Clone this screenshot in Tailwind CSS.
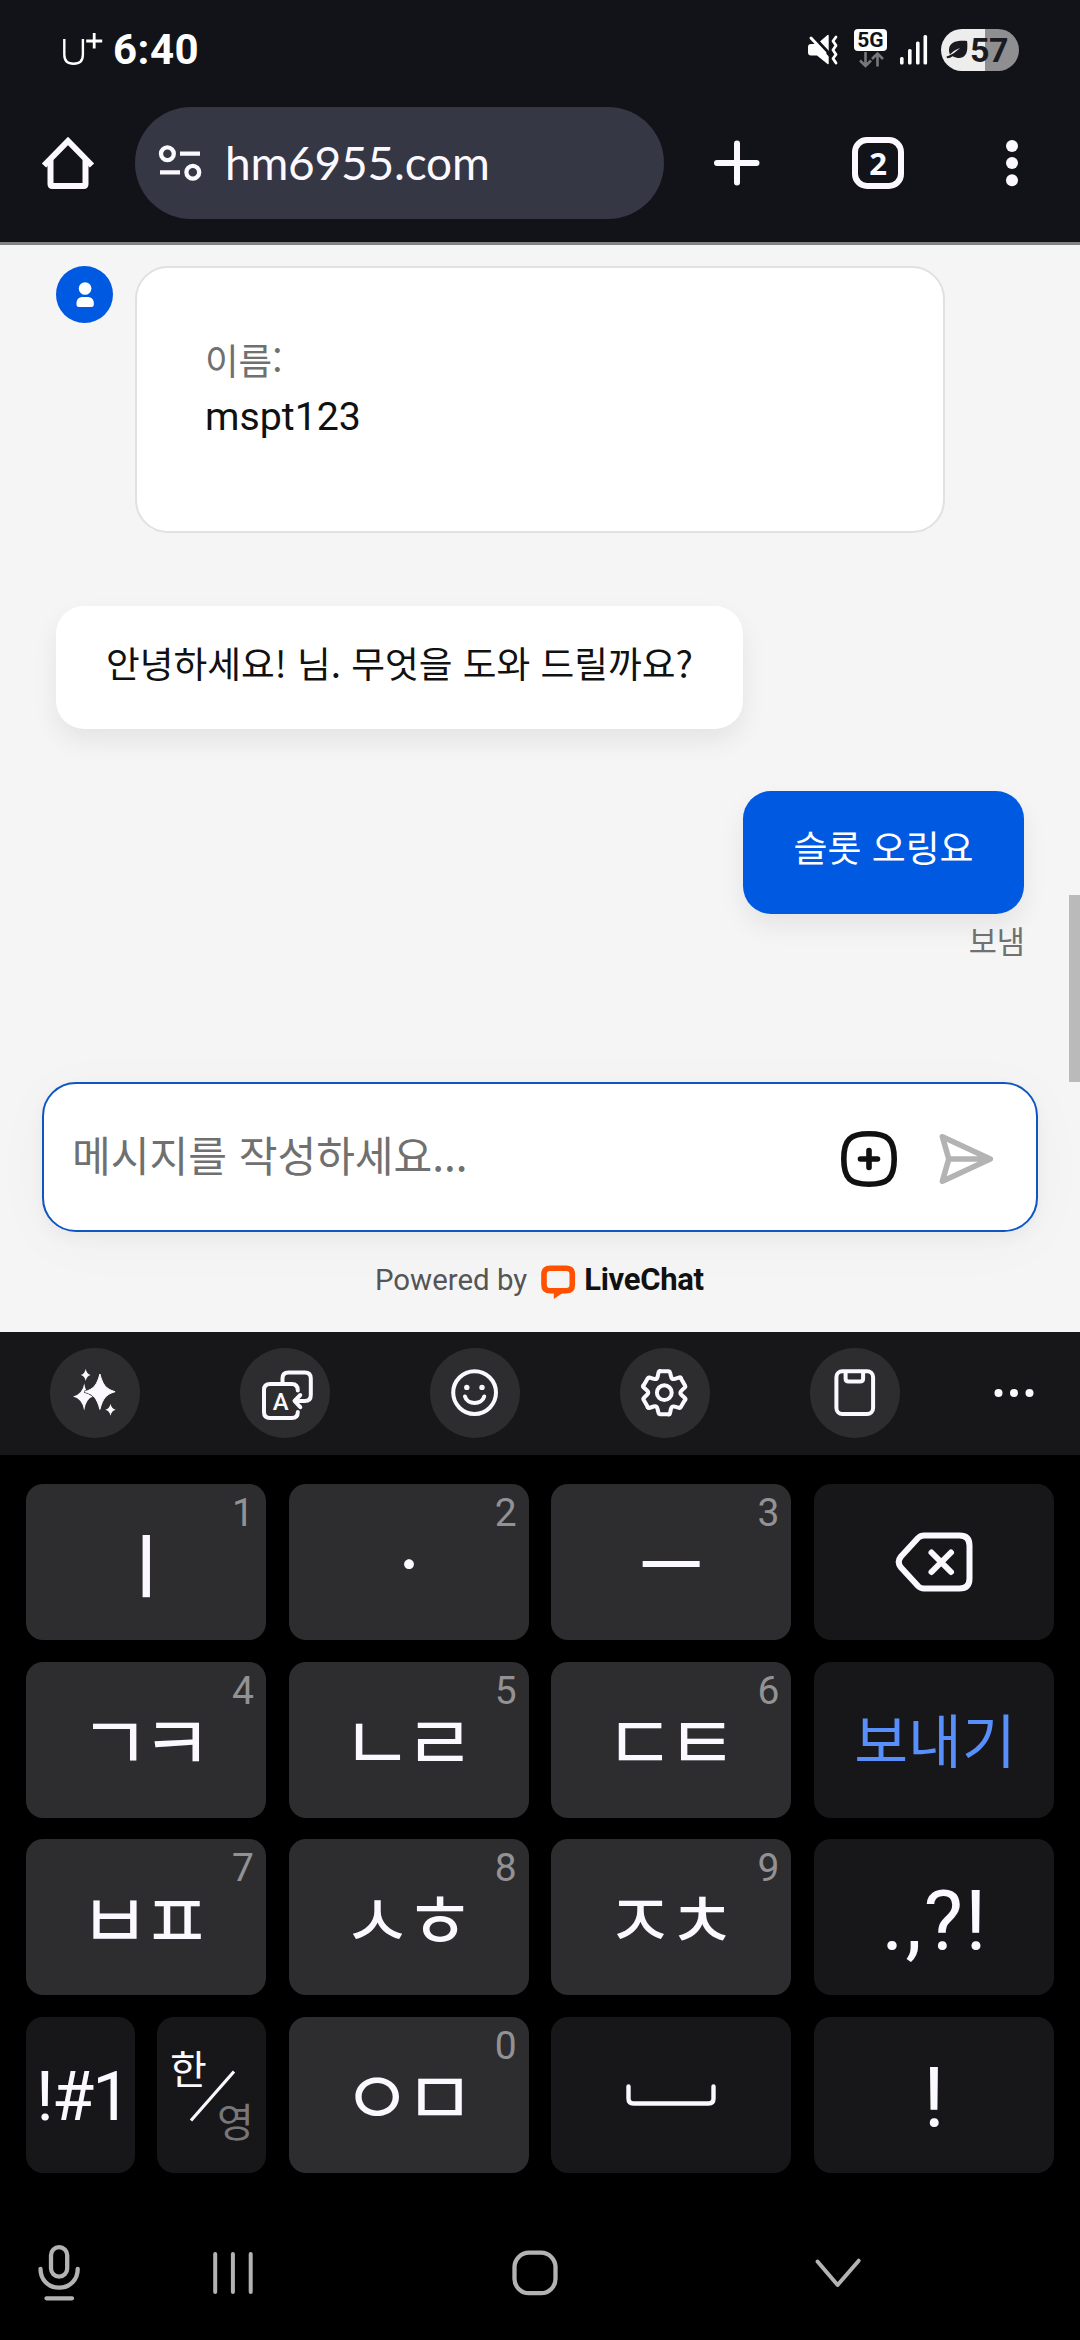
<!DOCTYPE html>
<html lang="ko">
<head>
<meta charset="utf-8">
<title>hm6955.com</title>
<script src="https://cdn.jsdelivr.net/npm/@tailwindcss/browser@4"></script>
</head>
<body class="w-[1080px] h-[2340px] overflow-hidden bg-black flex flex-col font-['Noto_Sans_CJK_KR',sans-serif] whitespace-nowrap">

<!-- Status bar -->
<header class="h-[242px] shrink-0 bg-[#121318] text-white flex flex-col">
  <div class="h-[100px] flex items-center pl-[62px] pr-[61px]">
    <svg class="w-[42px] h-[36px] -mt-[2px]" viewBox="62 31 42 36" fill="none" stroke="#fff">
      <path d="M64.3 39v15.5c0 6 3.4 9.3 9.3 9.3s9.3-3.3 9.3-9.3V39" stroke-width="2.4"/>
      <path d="M94.2 33v15.5M86.2 41h16" stroke-width="2.8"/>
    </svg>
    <span class="ml-[9px] font-['Roboto',sans-serif] font-bold text-[42px] leading-[60px] tracking-[0.5px]">6:40</span>
    <div class="ml-auto flex items-center">
      <svg class="w-[32px] h-[34px]" viewBox="807 33 32 34" fill="none" stroke-linecap="round" stroke-linejoin="round">
        <path d="M808 47q0-3 3-3h6L827.5 35q1.2-.8 1.2.7v27.6q0 1.500-1.200.7L817 55.500h-6q-3 0-3-3z" fill="#fff"/>
        <path d="M811 34.500l20 21.500" stroke="#121318" stroke-width="4" stroke-linecap="butt"/>
        <path d="M811 38l14 15" stroke="#fff" stroke-width="3"/>
        <path d="M836 37l-3 4 3 4.500-3 4.500 3 4.500-3 4 3 4.500" stroke="#fff" stroke-width="2.800"/>
      </svg>
      <div class="ml-[15px] w-[33px] h-[42px] flex flex-col items-center">
        <div class="w-[33px] h-[22px] rounded-[4px] bg-white text-[#121318] font-['Roboto',sans-serif] font-bold text-[21px] leading-[23px] text-center">5G</div>
        <svg class="w-[26px] h-[18px]" viewBox="857 51 26 18" fill="none" stroke="#77787c" stroke-width="2.600"><path d="M864.500 52v14M859 60.500l5.500 5.500 5.500-5.500M876.500 66.500v-13M871 59l5.500-5.500L882 59"/></svg>
      </div>
      <svg class="ml-[12px] w-[30px] h-[32px]" viewBox="899 34 30 32" fill="#fff"><rect x="900" y="57" width="3.600" height="7.500" rx="1.500"/><rect x="908" y="49" width="3.600" height="15.500" rx="1.500"/><rect x="916" y="41.500" width="3.600" height="23" rx="1.500"/><rect x="923.500" y="35" width="3.600" height="29.500" rx="1.500"/></svg>
      <div class="ml-[12px] w-[78px] h-[42px] rounded-full bg-linear-to-r from-[#ededee] from-[56%] to-[#8f8f92] to-[56%] flex items-center pl-[4px] text-[#1a1b20]">
        <svg class="w-[24px] h-[22px]" viewBox="945 39 24 22"><path d="M967 41c-11-.8-17.500 1.500-18 8.500 0 2 .3 3.500 1 5 3-3.500 6-5 10-6.500-3.500 3-7 6.500-13.500 8.500l.5 1.700c2.500-.2 4-.8 5.500-2 9 4.500 14.500 0 14.800-8 0-2.500.2-4.700-.3-7.200z" fill="currentColor"/></svg>
        <span class="ml-[1px] font-['Roboto',sans-serif] font-bold text-[34px] leading-[42px] -tracking-[0.5px]">57</span>
      </div>
    </div>
  </div>

  <!-- Browser toolbar -->
  <div class="h-[126px] flex items-center pl-[38px] pr-[56px]">
    <svg class="w-[60px] h-[60px]" viewBox="38 133 60 60" fill="none" stroke="#fbf9ff" stroke-width="6" stroke-linejoin="round"><path d="M44 165.500L68 141l24 24.500" stroke-linejoin="miter"/><path d="M50.500 160v24q0 2 2 2h31q2 0 2-2v-24"/></svg>
    <div class="ml-[37px] w-[529px] h-[112px] rounded-full bg-[#353745] flex items-center pl-[22px]">
      <svg class="w-[48px] h-[42px]" viewBox="157 142 48 42" fill="none" stroke="#fbf9ff" stroke-width="4.300"><circle cx="167.400" cy="153.700" r="6.400"/><path d="M180 153.700h20M160 172.300h20"/><circle cx="192.800" cy="172.300" r="6.400"/></svg>
      <span class="ml-[20px] font-['Lato',sans-serif] text-[46px] leading-[56px] -tracking-[0.2px] text-[#fbf9ff]">hm6955.com</span>
    </div>
    <svg class="ml-[48px] w-[50px] h-[50px]" viewBox="712 138 50 50" stroke="#fbf9ff" stroke-width="6" stroke-linecap="round"><path d="M737 143.500v39M717 163h39.500"/></svg>
    <div class="ml-[90px] w-[52px] h-[52px] rounded-[15px] border-6 border-[#fbf9ff] flex items-center justify-center text-[#fbf9ff] font-['Open_Sans',sans-serif] font-bold text-[31px] leading-[40px]">2</div>
    <svg class="ml-[101px] w-[14px] h-[50px]" viewBox="1005 138 14 50" fill="#fbf9ff"><circle cx="1012" cy="146" r="6"/><circle cx="1012" cy="163" r="6"/><circle cx="1012" cy="180.200" r="6"/></svg>
  </div>
</header>

<!-- Chat -->
<main class="relative h-[1090px] shrink-0 bg-[#f5f5f5] border-t-3 border-[#818286] text-[#111111]">
  <div class="pt-[21px] px-[56px] flex items-start">
    <div class="w-[57px] h-[57px] rounded-full bg-[#0059e1] flex items-center justify-center">
      <svg class="w-[20px] h-[28px]" viewBox="74.500 281 20 28" fill="#fff"><circle cx="84.600" cy="288.500" r="6.300"/><path d="M76 303c0-4 3-6 6-6h5.300c3 0 6 2 6 6v1.500q0 2.500-2.500 2.500H78.500q-2.500 0-2.500-2.500z"/></svg>
    </div>
    <div class="ml-[22px] w-[810px] h-[267px] rounded-[33px] border-2 border-[#e1e1e1] bg-white pt-[63px] pl-[68px]">
      <p class="text-[36.500px] leading-[57px] text-[#707070]">이름:</p>
      <p class="font-['Roboto',sans-serif] text-[39.300px] leading-[58px]">mspt123</p>
    </div>
  </div>
  <div class="mt-[73px] ml-[56px] w-[687px] h-[123px] rounded-[28px] bg-white shadow-[0_12px_26px_rgba(0,0,0,0.07)] flex items-center justify-center pb-[12px] text-[36.700px] leading-[54px]">안녕하세요! 님. 무엇을 도와 드릴까요?</div>
  <div class="mt-[62px] mr-[56px] flex flex-col items-end">
    <div class="w-[281px] h-[123px] rounded-[28px] bg-[#0059e1] shadow-[0_12px_26px_rgba(0,0,0,0.07)] flex items-center justify-center pb-[13px] text-[36.900px] leading-[54px] text-white">슬롯 오링요</div>
    <span class="mt-[4px] -mr-[1px] text-[30.600px] leading-[45px] text-[#707070]">보냄</span>
  </div>
  <div class="mt-[119px] mx-[42px] h-[150px] rounded-[34px] border-2 border-[#0f56c4] bg-white shadow-[0_6px_16px_rgba(0,0,0,0.04),0_10px_60px_rgba(0,0,0,0.03)] flex items-center">
    <span class="ml-[28px] mb-[6px] text-[42.100px] leading-[60px] text-[#707070]">메시지를 작성하세요...</span>
    <svg class="ml-auto mt-[4px] w-[60px] h-[60px]" viewBox="839 1129 60 60" fill="none" stroke="#111" stroke-width="5.600" stroke-linecap="round"><path d="M869 1133.800c18.500 0 25.200 5.500 25.200 25.200s-6.700 25.200-25.200 25.200-25.200-5.500-25.200-25.200 6.700-25.200 25.200-25.200z"/><path d="M869 1150.500v17M860.500 1159h17"/></svg>
    <svg class="ml-[38px] mr-[39px] mt-[4px] w-[60px] h-[60px]" viewBox="937 1129 60 60" fill="none" stroke="#b3b3b3" stroke-width="5.600" stroke-linejoin="round"><path d="M942.400 1136.700L990.300 1159l-47.900 22.300 6.400-22.300zM948.800 1159h41"/></svg>
  </div>
  <div class="mt-[18px] flex items-center pl-[375px] h-[60px] font-['Roboto',sans-serif]">
    <span class="text-[29.400px] leading-[40px] text-[#555]">Powered by</span>
    <svg class="ml-[13px] w-[36px] h-[36px] mt-[4px]" viewBox="540 1264.500 36 36" fill="none" stroke="#ff5100" stroke-width="5.600"><path d="M555.500 1291.300h-5.500q-6 0-6-6v-10.500q0-6 6-6h16.300q6 0 6 6v10.500q0 6-6 6h-5.300z"/><path d="M553.800 1290v9.500l9.500-6.500v-3z" fill="#ff5100" stroke="none"/></svg>
    <span class="ml-[8px] text-[31px] leading-[40px] font-bold -tracking-[0.300px]">LiveChat</span>
  </div>
  <div class="absolute right-0 top-[650px] w-[11px] h-[187px] bg-[#bababa]"></div>
</main>

<!-- Keyboard toolbar -->
<div class="h-[123px] shrink-0 bg-[#171719] flex items-center pl-[50px] pr-[44px] pb-[2px]">
  <div class="w-[90px] h-[90px] rounded-full bg-[#2d2d2f]">
    <svg class="w-[90px] h-[90px]" viewBox="50 1348 90 90" fill="#fbf9ff">
      <path d="M84.200 1383.500q1.500 10.500 8.800 13-7.300 2.500-8.800 14-1.500-11.500-11.200-14 9.700-2.500 11.200-13z"/>
      <path d="M99.900 1373c2.200 12 5 16 15.600 18.700-10.600 2.700-13.400 6.700-15.600 18.700-2.200-12-5-16-15.600-18.700 10.600-2.700 13.400-6.700 15.600-18.700z" stroke="#2d2d2f" stroke-width="2.200"/>
      <path d="M99.900 1374c3 11 6 15 15.200 17.700-9.200 2.700-12.200 6.700-15.200 17.700-3-11-6-15-15.200-17.700 9.200-2.700 12.200-6.700 15.200-17.700z" stroke="#fbf9ff" stroke-width="1"/>
      <path d="M85.700 1369q1 4.800 4.900 6-3.900 1.200-4.900 6-1-4.800-4.900-6 3.900-1.200 4.900-6zM110.500 1403.700q1 4.800 5.200 6-4.200 1.200-5.200 6-1-4.800-5.200-6 4.200-1.200 5.200-6z"/>
    </svg>
  </div>
  <div class="ml-[100px] w-[90px] h-[90px] rounded-full bg-[#2d2d2f]">
    <svg class="w-[90px] h-[90px]" viewBox="240 1348 90 90" fill="none" stroke="#fbf9ff" stroke-width="4" stroke-linecap="round" stroke-linejoin="round">
      <path d="M282.500 1383v-4.500q0-6 6-6h16.300q6 0 6 6v16.500q0 6-6 6H295M300.300 1395l-5.800 6 5.800 6.200"/>
      <path d="M297.800 1390.500q0-6.500-6-6.500h-21.800q-6 0-6 6v22q0 6 6 6h21.800q6 0 6-6"/>
      <text x="280.800" y="1410" text-anchor="middle" font-family="Roboto" font-size="24" font-weight="500" fill="#fbf9ff" stroke="none">A</text>
    </svg>
  </div>
  <div class="ml-[100px] w-[90px] h-[90px] rounded-full bg-[#2d2d2f]">
    <svg class="w-[90px] h-[90px]" viewBox="430 1348 90 90" fill="none" stroke="#fbf9ff" stroke-width="4" stroke-linecap="round">
      <circle cx="474.600" cy="1392.600" r="21.400"/><path d="M465 1396.500c2 8.500 17.200 8.500 19.200 0"/>
      <g fill="#fbf9ff" stroke="none"><circle cx="466.800" cy="1387.400" r="2.700"/><circle cx="482" cy="1387.400" r="2.700"/></g>
    </svg>
  </div>
  <div class="ml-[100px] w-[90px] h-[90px] rounded-full bg-[#2d2d2f]">
    <svg class="w-[90px] h-[90px]" viewBox="-44.300 -44.700 90 90" fill="none" stroke="#fbf9ff" stroke-width="4" stroke-linecap="round" stroke-linejoin="round">
      <circle r="7.400"/>
      <path id="tooth" d="M-4.500-21.500h9q1 0 1.200 1l1.100 4.500q.8 3 3.800 2.200l4.600-1.500q1-.3 1.500.6"/>
      <use href="#tooth" transform="rotate(60)"/><use href="#tooth" transform="rotate(120)"/><use href="#tooth" transform="rotate(180)"/><use href="#tooth" transform="rotate(240)"/><use href="#tooth" transform="rotate(300)"/>
    </svg>
  </div>
  <div class="ml-[100px] w-[90px] h-[90px] rounded-full bg-[#2d2d2f]">
    <svg class="w-[90px] h-[90px]" viewBox="810 1348 90 90" fill="none" stroke="#fbf9ff" stroke-width="4"><rect x="836.400" y="1371.200" width="36.700" height="42.800" rx="6"/><path d="M845.600 1372v6.500q0 3 3 3h11.500q3 0 3-3V1372"/></svg>
  </div>
  <svg class="ml-auto w-[44px] h-[20px]" viewBox="992.500 1382.500 44 20" fill="#fbf9ff"><circle cx="999" cy="1392.500" r="4"/><circle cx="1014.500" cy="1392.500" r="4"/><circle cx="1030" cy="1392.500" r="4"/></svg>
</div>

<!-- Key grid -->
<div class="mt-[29px] ml-[26px] w-[1028px] h-[689px] shrink-0 grid grid-cols-4 grid-rows-4 gap-x-[22.660px] gap-y-[21.660px] text-[#fbf9ff] text-[77px] leading-[100px]">
  <div class="relative rounded-[17px] bg-[#2d2d2f] flex items-center justify-center pb-[1px] text-[69px] font-medium">ㅣ<span class="absolute right-[12px] top-[5px] font-['Roboto',sans-serif] font-normal text-[39px] leading-[48px] text-[#929295]">1</span></div>
  <div class="relative rounded-[17px] bg-[#2d2d2f] flex items-center justify-center pb-[4px] text-[65px] font-medium">ㆍ<span class="absolute right-[12px] top-[5px] font-['Roboto',sans-serif] font-normal text-[39px] leading-[48px] text-[#929295]">2</span></div>
  <div class="relative rounded-[17px] bg-[#2d2d2f] flex items-center justify-center pb-[2px] text-[69px] font-medium">ㅡ<span class="absolute right-[12px] top-[5px] font-['Roboto',sans-serif] font-normal text-[39px] leading-[48px] text-[#929295]">3</span></div>
  <div class="rounded-[17px] bg-[#171719] flex items-center justify-center">
    <svg class="w-[84px] h-[66px]" viewBox="892 1529.500 84 66" fill="none" stroke="#fbf9ff" stroke-width="6" stroke-linecap="round" stroke-linejoin="round"><path d="M924 1536h35.500q10 0 10 10v33q0 10-10 10H924q-3.500 0-6-2.500l-17-18.500q-4.500-5.500 0-11l17-18.500q2.500-2.500 6-2.500z"/><path d="M931.500 1553l19.500 19.500M951 1553l-19.500 19.500"/></svg>
  </div>

  <div class="relative rounded-[17px] bg-[#2d2d2f] flex items-center justify-center pb-[3px] pr-[9px] tracking-[-8.500px]">ㄱㅋ<span class="absolute right-[12px] top-[5px] font-['Roboto',sans-serif] font-normal text-[39px] leading-[48px] tracking-normal text-[#929295]">4</span></div>
  <div class="relative rounded-[17px] bg-[#2d2d2f] flex items-center justify-center pb-[3px] pr-[9px] tracking-[-8.500px]">ㄴㄹ<span class="absolute right-[12px] top-[5px] font-['Roboto',sans-serif] font-normal text-[39px] leading-[48px] tracking-normal text-[#929295]">5</span></div>
  <div class="relative rounded-[17px] bg-[#2d2d2f] flex items-center justify-center pb-[3px] pr-[9px] tracking-[-8.500px]">ㄷㅌ<span class="absolute right-[12px] top-[5px] font-['Roboto',sans-serif] font-normal text-[39px] leading-[48px] tracking-normal text-[#929295]">6</span></div>
  <div class="rounded-[17px] bg-[#171719] flex items-center justify-center text-[58.500px] text-[#588ffb] pb-[3px] pl-[2px]">보내기</div>

  <div class="relative rounded-[17px] bg-[#2d2d2f] flex items-center justify-center pb-[3px] pr-[9px] tracking-[-8.500px]">ㅂㅍ<span class="absolute right-[12px] top-[5px] font-['Roboto',sans-serif] font-normal text-[39px] leading-[48px] tracking-normal text-[#929295]">7</span></div>
  <div class="relative rounded-[17px] bg-[#2d2d2f] flex items-center justify-center pb-[3px] pr-[9px] tracking-[-8.500px]">ㅅㅎ<span class="absolute right-[12px] top-[5px] font-['Roboto',sans-serif] font-normal text-[39px] leading-[48px] tracking-normal text-[#929295]">8</span></div>
  <div class="relative rounded-[17px] bg-[#2d2d2f] flex items-center justify-center pb-[3px] pr-[9px] tracking-[-8.500px]">ㅈㅊ<span class="absolute right-[12px] top-[5px] font-['Roboto',sans-serif] font-normal text-[39px] leading-[48px] tracking-normal text-[#929295]">9</span></div>
  <div class="rounded-[17px] bg-[#171719] flex items-center justify-center font-['Roboto',sans-serif] text-[83px] tracking-[2px] pt-[9px] pl-[2px]">.,?!</div>

  <div class="flex justify-between">
    <div class="w-[109px] rounded-[17px] bg-[#171719] flex items-center justify-center font-['Roboto',sans-serif] text-[69px] -tracking-[2px] pt-[4px] pl-[4px]">!#1</div>
    <div class="relative w-[109px] rounded-[17px] bg-[#171719] text-[40px] leading-[48px]">
      <span class="absolute left-[13px] top-[26px]">한</span>
      <svg class="absolute left-0 top-0 w-[109px] h-[156px]" viewBox="157 2017 109 156" stroke="#fbf9ff" stroke-width="3.200"><path d="M191 2120.500L234 2071.500"/></svg>
      <span class="absolute left-[60px] top-[79px] text-[#77777a]">영</span>
    </div>
  </div>
  <div class="relative rounded-[17px] bg-[#2d2d2f] flex items-center justify-center pb-[3px] pr-[9px] tracking-[-8.500px]">ㅇㅁ<span class="absolute right-[12px] top-[5px] font-['Roboto',sans-serif] font-normal text-[39px] leading-[48px] tracking-normal text-[#929295]">0</span></div>
  <div class="rounded-[17px] bg-[#171719] flex items-center justify-center">
    <svg class="w-[94px] h-[26px]" viewBox="624 2082 94 26" fill="none" stroke="#fbf9ff" stroke-width="4.400" stroke-linecap="round"><path d="M628.500 2086.500v12q0 5 5 5h75q5 0 5-5v-12"/></svg>
  </div>
  <div class="rounded-[17px] bg-[#171719] flex items-center justify-center font-['Roboto',sans-serif] text-[83px] pt-[9px]">!</div>
</div>

<!-- Navigation bar -->
<nav class="flex-1 flex items-start pt-[67px] pl-[34px] text-[#b3b3b3]">
  <svg class="w-[50px] h-[66px]" viewBox="34 2240 50 66" fill="none" stroke="currentColor" stroke-width="4.300" stroke-linecap="round"><rect x="51" y="2247.200" width="16.200" height="29.500" rx="8.100"/><path d="M40.500 2269c0 10.500 7.500 18.700 18.600 18.700s18.600-8.200 18.600-18.700M46.500 2298.300h25.500"/></svg>
  <svg class="ml-[126px] w-[46px] h-[66px]" viewBox="210 2240 46 66" stroke="currentColor" stroke-width="4" stroke-linecap="round"><path d="M215.200 2254v38M232.900 2254v38M250.700 2254v38"/></svg>
  <svg class="ml-[252px] w-[54px] h-[66px]" viewBox="508 2240 54 66" fill="none" stroke="currentColor" stroke-width="4.300"><rect x="514.500" y="2252.700" width="41" height="40.500" rx="14.500"/></svg>
  <svg class="ml-[250px] w-[52px] h-[66px]" viewBox="812 2240 52 66" fill="none" stroke="currentColor" stroke-width="4" stroke-linecap="round" stroke-linejoin="round"><path d="M817.500 2261.500L837.600 2285 858.700 2260.700"/></svg>
</nav>
</body>
</html>
